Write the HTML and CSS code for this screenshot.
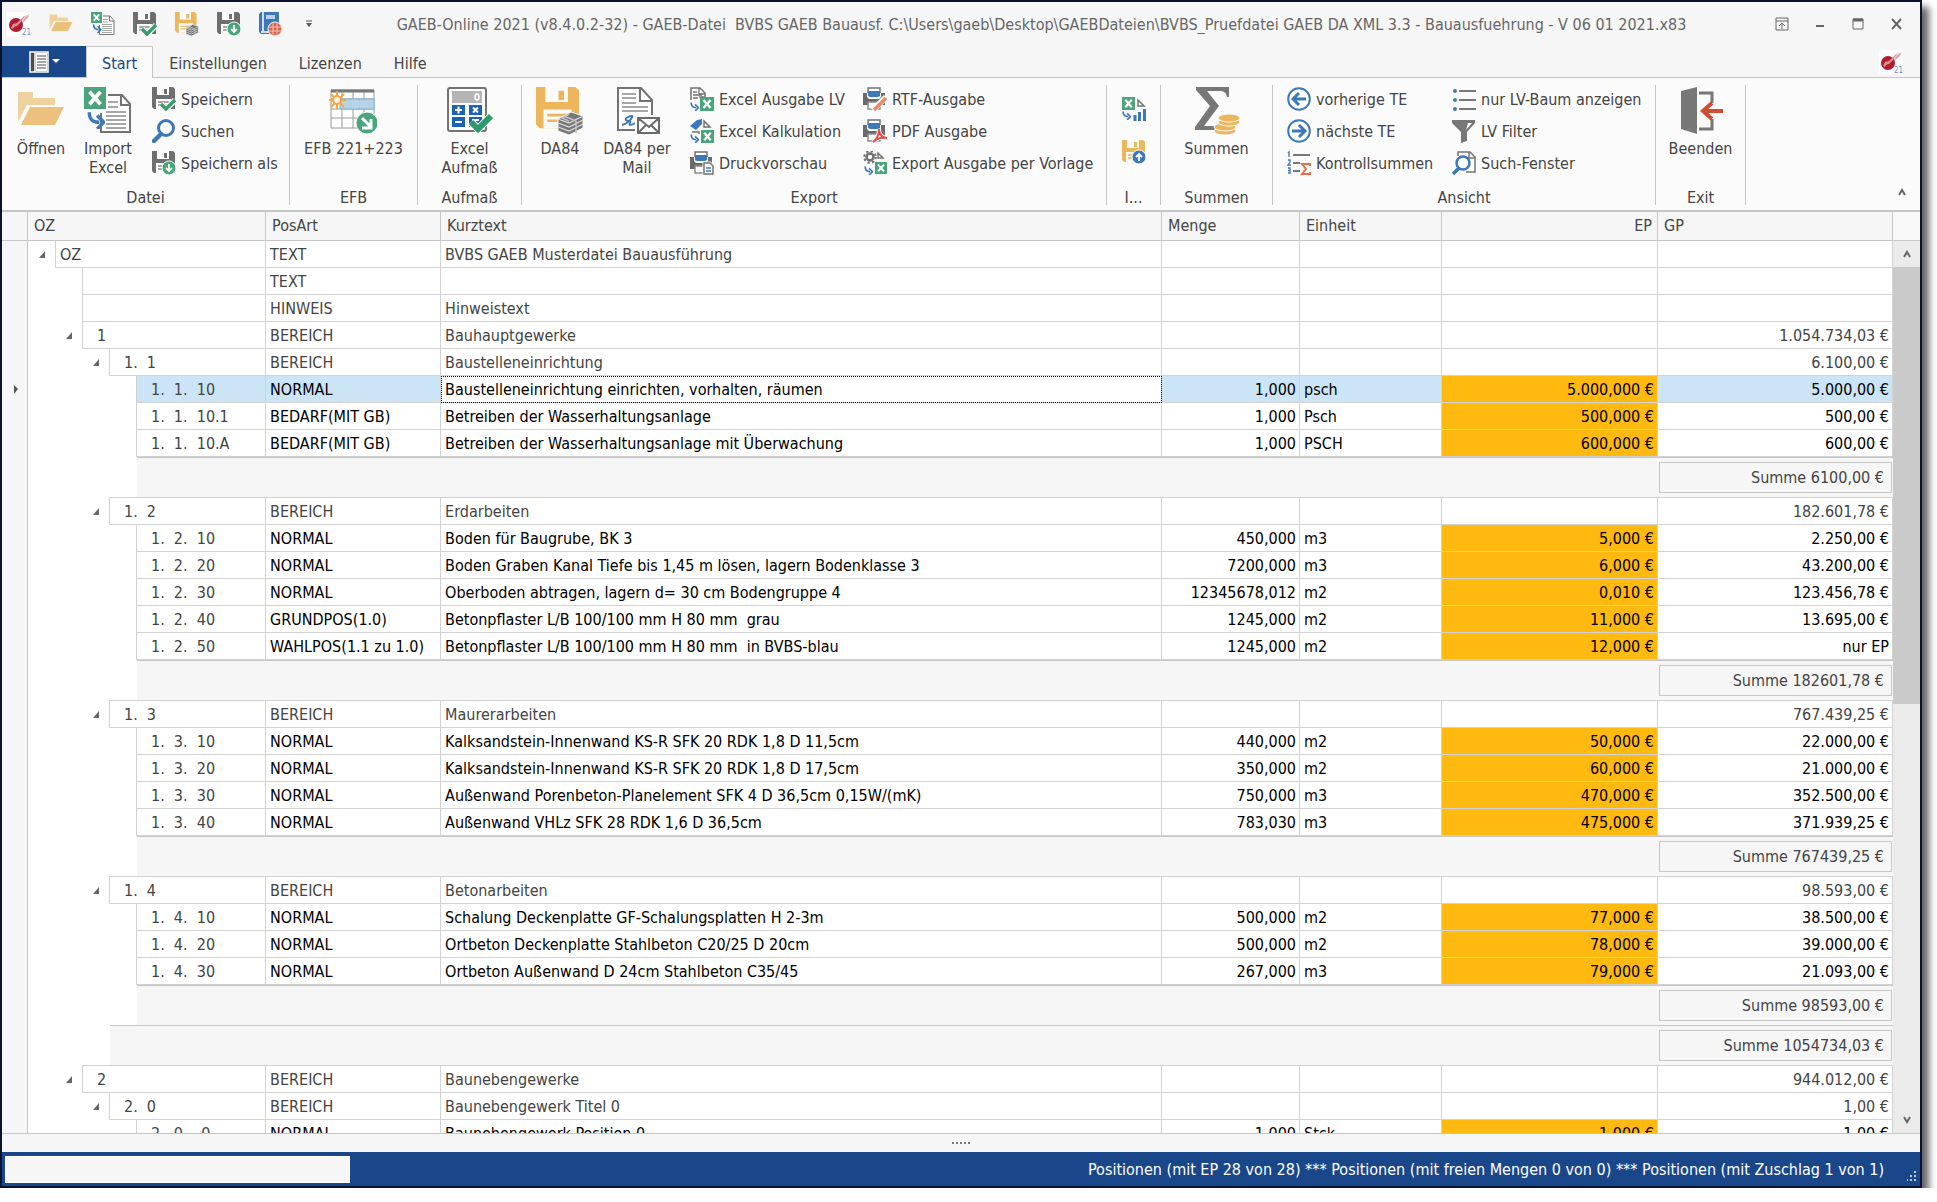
FILE: index.html
```
<!DOCTYPE html>
<html lang="de">
<head>
    <meta charset="UTF-8">
    <meta name="viewport" content="width=device-width, initial-scale=1.0">
    <title>GAEB-Online 2021</title>
    <link rel="stylesheet" href="styles.css">
</head>
<body>
    <!-- Icon sprite -->
    <svg class="sprite" aria-hidden="true">
        <symbol id="logo" viewBox="0 0 24 24">
            <rect width="24" height="24" fill="#fff"/>
            <path d="M12 9l5-5 6-2-2 4-6 6z" fill="#ecc3c8"/>
            <path d="M14 8l3-3M17 8l4-4" stroke="#d08a94" fill="none"/>
            <circle cx="9" cy="13" r="7" fill="#b01c2e"/>
            <path d="M4 16l2-4 4-1 4-4 1 2-5 5-3 1-1 2z" fill="#d98f98"/>
            <text x="15" y="23" font-size="8" fill="#6f8cc4">21</text>
        </symbol>
        <symbol id="folder" viewBox="0 0 48 48">
            <path d="M1 5h15v6h22v7H10L1 35z" fill="#f0d2a0"/>
            <path d="M13 20h34L38 38H4z" fill="#ebc17d"/>
        </symbol>
        <symbol id="xl" viewBox="0 0 14 14">
            <rect width="14" height="14" fill="#4aa57c"/>
            <path d="M3.500 3l7 8M10.500 3l-7 8" stroke="#fff" stroke-width="2.400"/>
        </symbol>
        <symbol id="arrow-in" viewBox="0 0 16 16">
            <path d="M2 1c0 6 2 9 9 9" fill="none" stroke="#3d78b8" stroke-width="3"/>
            <path d="M9 4l6 6-6 6" fill="none" stroke="#3d78b8" stroke-width="3"/>
        </symbol>
        <symbol id="import-xl" viewBox="0 0 48 48">
            <path d="M24 8h14l8 9v28H17V26" fill="#fff" stroke="#737373" stroke-width="2"/>
            <path d="M37 8v10h9" fill="none" stroke="#737373" stroke-width="2"/>
            <path d="M24 15h10M24 20h10M22 25h20M22 29h20M22 33h20M22 37h20M22 41h20" stroke="#8a8a8a" stroke-width="1.500"/>
            <use href="#xl" x="0" y="0" width="22" height="22"/>
            <use href="#arrow-in" x="3" y="24" width="18" height="18"/>
        </symbol>
        <symbol id="disk" viewBox="0 0 24 24">
            <path d="M0 0h21l2 2v20H2l-2-2z"/>
            <path d="M5 0h12v8H5zM4 12h15v10H4z" fill="#fafafa"/>
            <path d="M12 2h3v5h-3z"/>
            <path d="M6 15h11M6 18h11" stroke="currentColor" stroke-width="1.400"/>
        </symbol>
        <symbol id="save" viewBox="0 0 24 24">
            <use href="#disk" width="24" height="24" fill="#6f6f6f" color="#8a8a8a"/>
            <path d="M9 17l5 5 9-9" fill="none" stroke="#fafafa" stroke-width="6"/>
            <path d="M9 17l5 5 9-9" fill="none" stroke="#3c9b6e" stroke-width="3.500"/>
        </symbol>
        <symbol id="save-as" viewBox="0 0 24 24">
            <use href="#disk" width="24" height="24" fill="#6f6f6f" color="#8a8a8a"/>
            <circle cx="17" cy="17" r="7" fill="#4aa57c" stroke="#fafafa"/>
            <path d="M17 13v7M14 17l3 3 3-3" fill="none" stroke="#fff" stroke-width="1.800"/>
        </symbol>
        <symbol id="save-up" viewBox="0 0 24 24">
            <use href="#disk" width="24" height="24" fill="#ebb65c" color="#ebb65c"/>
            <circle cx="17" cy="17" r="7" fill="#3d78b8" stroke="#fafafa"/>
            <path d="M17 21v-7M14 17l3-3 3 3" fill="none" stroke="#fff" stroke-width="1.800"/>
        </symbol>
        <symbol id="da84" viewBox="0 0 48 48">
            <use href="#disk" width="45" height="45" fill="#ebb65c" color="#ebb65c"/>
            <path d="M22 32l13-7 12 4v12l-14 7-11-4z" fill="#777" stroke="#fafafa"/>
            <path d="M22 36l11 4 14-7M22 40l11 4 14-7M22 32l11 4 14-7" fill="none" stroke="#ddd" stroke-width="1.300"/>
            <path d="M28 29l12 5v12M33 27l-7 4 7 3" fill="none" stroke="#c4c4c4" stroke-width="1.500"/>
        </symbol>
        <symbol id="book" viewBox="0 0 24 24">
            <path d="M2 0h18v22H2l-2-2V2z" fill="#3d78b8"/>
            <path d="M4 0v19M2 20h14" stroke="#fff" stroke-width="1.500"/>
            <rect x="7" y="3" width="9" height="4" fill="#bcd2ea"/>
            <circle cx="16" cy="17" r="7" fill="#d9634d" stroke="#fafafa"/>
            <path d="M10 15h12M10 19h12M14 11v12M18 11v12" stroke="#f3c3b9"/>
        </symbol>
        <symbol id="search" viewBox="0 0 24 24">
            <circle cx="14" cy="9" r="7.500" fill="#fff" stroke="#3d78b8" stroke-width="3"/>
            <path d="M9 15l-7 7" stroke="#3d78b8" stroke-width="4.500" stroke-linecap="round"/>
        </symbol>
        <symbol id="efb" viewBox="0 0 48 48">
            <path d="M2 3h43v38H2zM2 12h43M2 22h43M2 31h43M13 3v38M24 3v38M35 3v38" fill="#fff" stroke="#9a9a9a"/>
            <path d="M2 4h43" stroke="#777" stroke-width="3"/>
            <rect x="11" y="12" width="34" height="10" fill="#b6d3e8" stroke="#7fb2d8"/>
            <path d="M8 4v18M0 13h17M2 7l13 13M15 7L2 20" stroke="#f0a848" stroke-width="2"/>
            <circle cx="8" cy="13" r="4" fill="#fdf3df" stroke="#f0a848" stroke-width="2"/>
            <circle cx="38" cy="36" r="11" fill="#4aa57c" stroke="#fafafa"/>
            <path d="M33 31l9 9M42 32v9h-9" fill="none" stroke="#fff" stroke-width="3"/>
        </symbol>
        <symbol id="calc" viewBox="0 0 48 48">
            <rect x="3" y="1" width="38" height="43" rx="2" fill="#fff" stroke="#737373" stroke-width="2"/>
            <rect x="7" y="4" width="30" height="12" fill="#b5b5b5"/>
            <ellipse cx="32" cy="10" rx="2" ry="3" fill="none" stroke="#fff" stroke-width="1.500"/>
            <path d="M7 18h13v10H7zM24 18h13v10H24zM7 30h13v10H7zM24 30h13v10H24z" fill="#1a62b5"/>
            <path d="M10 23h7M13.500 19.500v7M28 20.500l5 5M33 20.500l-5 5M10 35h7M27 33h7" stroke="#fff" stroke-width="2"/>
            <path d="M26 35l7 7 13-13" fill="none" stroke="#fafafa" stroke-width="8"/>
            <path d="M26 35l7 7 13-13" fill="none" stroke="#2a9a68" stroke-width="6"/>
        </symbol>
        <symbol id="mail" viewBox="0 0 48 48">
            <path d="M5 1h23l11 12v30H5z" fill="#fff" stroke="#737373" stroke-width="2"/>
            <path d="M27 1v13h12" fill="none" stroke="#737373" stroke-width="2"/>
            <path d="M9 7h14M9 11h14M9 16h14M9 20h26M9 24h26" stroke="#8a8a8a" stroke-width="1.500"/>
            <path d="M9 38c6-1 12-9 10-9s-8 2-6 4 6 0 4 3 2 2 5 0" fill="none" stroke="#3d78b8" stroke-width="1.800"/>
            <rect x="24" y="30" width="23" height="17" fill="#fff" stroke="#fafafa" stroke-width="4"/>
            <path d="M25 31h21v15H25zl11 9 10-9M25 46l8-8M46 46l-8-8" fill="#fff" stroke="#6b6b6b" stroke-width="2"/>
        </symbol>
        <symbol id="export-xl" viewBox="0 0 24 24">
            <path d="M1 13V1h9l5 5v4H9" fill="#fff" stroke="#737373" stroke-width="1.500"/>
            <path d="M9 1v6h6M3 5h4M3 8h9M3 11h5" fill="none" stroke="#737373" stroke-width="1.300"/>
            <use href="#arrow-in" x="0" y="15" width="9" height="9"/>
            <use href="#xl" x="10" y="10" width="14" height="14"/>
        </symbol>
        <symbol id="kalk" viewBox="0 0 24 24">
            <path d="M0 7l7-6 5-1v5l-6 6z" fill="#3d78b8"/>
            <path d="M14 2l6 6h-6zM2 13h7v2" fill="none" stroke="#737373" stroke-width="1.500"/>
            <use href="#arrow-in" x="0" y="15" width="9" height="9"/>
            <use href="#xl" x="11" y="11" width="13" height="13"/>
        </symbol>
        <symbol id="gear-xl" viewBox="0 0 24 24">
            <circle cx="7" cy="6" r="3.500" fill="none" stroke="#6f6f6f" stroke-width="2.500"/>
            <circle cx="7" cy="6" r="5.800" fill="none" stroke="#6f6f6f" stroke-width="2" stroke-dasharray="2.300 2.250"/>
            <path d="M15 2l5 5h-5z" fill="none" stroke="#737373" stroke-width="1.500"/>
            <use href="#arrow-in" x="1" y="15" width="9" height="9"/>
            <use href="#xl" x="12" y="11" width="12" height="12"/>
        </symbol>
        <symbol id="printer" viewBox="0 0 24 24">
            <path d="M5 6V1h12v5" fill="#fff" stroke="#737373" stroke-width="1.500"/>
            <path d="M0 6h4v4l2 2h10l2-2V6h4v12H0z" fill="#6b6b6b"/>
            <path d="M5 4h12v5l-2 1H7L5 9z" fill="#3d78b8"/>
            <path d="M5 15h12v7H5z" fill="#fff" stroke="#8a8a8a" stroke-width="1.500"/>
        </symbol>
        <symbol id="print-preview" viewBox="0 0 24 24">
            <use href="#printer" width="24" height="24"/>
            <path d="M14 12h6l3 3v8h-9z" fill="#fff" stroke="#fafafa" stroke-width="3"/>
            <path d="M14 12h6l3 3v8h-9z" fill="#fff" stroke="#737373" stroke-width="1.500"/>
            <path d="M16 17h5M16 20h5" stroke="#3d78b8" stroke-width="1.500"/>
        </symbol>
        <symbol id="print-rtf" viewBox="0 0 24 24">
            <use href="#printer" width="24" height="24"/>
            <path d="M10 23L23 10" stroke="#fafafa" stroke-width="6"/>
            <path d="M11 23L23 11" stroke="#ea8a60" stroke-width="3.500"/>
        </symbol>
        <symbol id="print-pdf" viewBox="0 0 24 24">
            <use href="#printer" width="24" height="24"/>
            <path d="M10 23c4-2 6-8 6-13 0 6 4 9 8 9-4-1-9 0-14 4z" fill="#fafafa" stroke="#fafafa" stroke-width="4"/>
            <path d="M10 23c4-2 6-8 6-13 0 6 4 9 8 9-4-1-9 0-14 4z" fill="none" stroke="#e8484a" stroke-width="2"/>
        </symbol>
        <symbol id="xl-chart" viewBox="0 0 24 24">
            <use href="#xl" width="13" height="13"/>
            <path d="M16 3l6 6h-6z" fill="none" stroke="#737373" stroke-width="1.500"/>
            <use href="#arrow-in" x="0" y="14" width="9" height="9"/>
            <path d="M13 24v-6M17.500 24v-9M22.500 24V12" stroke="#3d78b8" stroke-width="3"/>
        </symbol>
        <symbol id="sigma" viewBox="0 0 48 48">
            <path d="M4 0h33v10h-2c-1-5-3-6-8-6H15l12 15-15 20h11v4H3v-3l15-21L4 3z" fill="#777"/>
            <g fill="#ebb65c" stroke="#fafafa" stroke-width="1">
                <ellipse cx="33" cy="44" rx="11" ry="4"/>
                <ellipse cx="33" cy="40" rx="11" ry="4"/>
                <ellipse cx="37" cy="35" rx="11" ry="4"/>
                <ellipse cx="37" cy="31" rx="11" ry="4"/>
            </g>
        </symbol>
        <symbol id="prev" viewBox="0 0 24 24">
            <circle cx="12" cy="12" r="10.800" fill="#fff" stroke="#3d78b8" stroke-width="2"/>
            <path d="M19 12H7M12 6l-6 6 6 6" fill="none" stroke="#3d78b8" stroke-width="3"/>
        </symbol>
        <symbol id="next" viewBox="0 0 24 24">
            <circle cx="12" cy="12" r="10.800" fill="#fff" stroke="#3d78b8" stroke-width="2"/>
            <path d="M5 12h12M12 6l6 6-6 6" fill="none" stroke="#3d78b8" stroke-width="3"/>
        </symbol>
        <symbol id="checksum" viewBox="0 0 24 24">
            <path d="M6 4h17M6 12h7M6 20h7" stroke="#777" stroke-width="2"/>
            <path d="M1 2l1-1v5M1 9h2v2l-2 3h3M1 17h2v5H1M1 19.500h2" fill="none" stroke="#3d78b8" stroke-width="1.300"/>
            <path d="M23 15v-2h-8l4 5-4 5h8v-2" fill="none" stroke="#e07248" stroke-width="2"/>
        </symbol>
        <symbol id="tree" viewBox="0 0 24 24">
            <path d="M7 4h17M7 13h17M7 22h17" stroke="#777" stroke-width="2"/>
            <g fill="#3d78b8"><circle cx="3" cy="4" r="2"/><circle cx="3" cy="13" r="2"/><circle cx="3" cy="22" r="2"/></g>
        </symbol>
        <symbol id="filter" viewBox="0 0 24 24">
            <path d="M0 1h23v3l-8 9v9l-6 2V13L0 4z" fill="#777"/>
            <path d="M16 4h4l-6 7z" fill="#fafafa"/>
        </symbol>
        <symbol id="find-window" viewBox="0 0 24 24">
            <path d="M6 5V1h12l5 5v15h-9" fill="#fff" stroke="#737373" stroke-width="1.500"/>
            <path d="M17 1v6h6" fill="none" stroke="#737373" stroke-width="1.500"/>
            <circle cx="11" cy="12" r="6.500" fill="#fff" stroke="#3d78b8" stroke-width="2.500"/>
            <path d="M7 17l-6 6" stroke="#3d78b8" stroke-width="3.500"/>
        </symbol>
        <symbol id="exit" viewBox="0 0 48 48">
            <path d="M4 4L20 0v47L4 42z" fill="#777"/>
            <path d="M22 6h13v10M35 32v10H22" fill="none" stroke="#777" stroke-width="3"/>
            <path d="M46 24H28M35 16l-9 8 9 8" fill="none" stroke="#cf4d33" stroke-width="4"/>
        </symbol>
        <symbol id="menu" viewBox="0 0 20 22">
            <path d="M1 1h18v20H1z" fill="#4d4d4d" stroke="#fff" stroke-width="1.500"/>
            <path d="M6 1v20" stroke="#fff" stroke-width="1.500"/>
            <path d="M7 2h11v18H7z" fill="#fff"/>
            <path d="M8 5h9M8 8h9M8 11h9M8 14h9M8 17h9" stroke="#4d4d4d"/>
        </symbol>
        <symbol id="chev-up" viewBox="0 0 10 8"><path d="M2 7l3-5 3 5" fill="none" stroke="#666" stroke-width="2"/></symbol>
        <symbol id="chev-down" viewBox="0 0 10 8"><path d="M2 1l3 5 3-5" fill="none" stroke="#666" stroke-width="2"/></symbol>
        <symbol id="expanded" viewBox="0 0 6 7"><path d="M6 0v7H0z" fill="#666"/></symbol>
    </svg>

    <div class="window">
        <header class="titlebar">
            <div class="quick-access">
                <svg class="icon"><use href="#logo"/></svg>
                <button aria-label="Öffnen"><svg class="icon"><use href="#folder"/></svg></button>
                <button aria-label="Import Excel"><svg class="icon"><use href="#import-xl"/></svg></button>
                <button aria-label="Speichern"><svg class="icon"><use href="#save"/></svg></button>
                <button aria-label="DA84"><svg class="icon"><use href="#da84"/></svg></button>
                <button aria-label="Speichern als"><svg class="icon"><use href="#save-as"/></svg></button>
                <button aria-label="Handbuch"><svg class="icon"><use href="#book"/></svg></button>
                <button aria-label="Anpassen"><svg width="24" height="24"><path d="M5 9h6" stroke="#555"/><path d="M5 11h6l-3 4z" fill="#555"/></svg></button>
            </div>
            <div class="title">GAEB-Online 2021 (v8.4.0.2-32) - GAEB-Datei  BVBS GAEB Bauausf. C:\Users\gaeb\Desktop\GAEBDateien\BVBS_Pruefdatei GAEB DA XML 3.3 - Bauausfuehrung - V 06 01 2021.x83</div>
            <div class="window-buttons">
                <button aria-label="Menüband"><svg width="14" height="14"><path d="M1 1h12v12H1zM1 4h12M7 12V6M4 9l3-3 3 3" fill="none" stroke="#666"/></svg></button>
                <button aria-label="Minimieren"><svg width="14" height="14"><path d="M3 9h8" stroke="#666" stroke-width="2"/></svg></button>
                <button aria-label="Maximieren"><svg width="14" height="14"><path d="M2 2h10v10H2z" fill="none" stroke="#666"/><path d="M2 3h10" stroke="#666" stroke-width="3"/></svg></button>
                <button aria-label="Schließen"><svg width="14" height="14"><path d="M3 2l9 10M12 2L3 12" stroke="#666" stroke-width="2"/></svg></button>
            </div>
        </header>

        <nav class="tabs">
            <button class="app-menu" aria-label="Datei"><svg width="20" height="22"><use href="#menu"/></svg><svg width="8" height="5"><path d="M0 0h8L4 4z" fill="#fff"/></svg></button>
            <button class="tab active">Start</button>
            <button class="tab">Einstellungen</button>
            <button class="tab">Lizenzen</button>
            <button class="tab">Hilfe</button>
            <svg class="icon tab-logo"><use href="#logo"/></svg>
        </nav>

        <div class="ribbon">
            <section class="group">
                <div class="group-body datei">
                    <button class="big"><svg><use href="#folder"/></svg>Öffnen</button>
                    <button class="big"><svg><use href="#import-xl"/></svg>Import<br>Excel</button>
                    <div class="small-list">
                        <button class="small"><svg class="icon"><use href="#save"/></svg>Speichern</button>
                        <button class="small"><svg class="icon"><use href="#search"/></svg>Suchen</button>
                        <button class="small"><svg class="icon"><use href="#save-as"/></svg>Speichern als</button>
                    </div>
                </div>
                <div class="caption">Datei</div>
            </section>
            <section class="group">
                <div class="group-body">
                    <button class="big"><svg><use href="#efb"/></svg>EFB 221+223</button>
                </div>
                <div class="caption">EFB</div>
            </section>
            <section class="group">
                <div class="group-body">
                    <button class="big"><svg><use href="#calc"/></svg>Excel<br>Aufmaß</button>
                </div>
                <div class="caption">Aufmaß</div>
            </section>
            <section class="group">
                <div class="group-body export">
                    <button class="big"><svg><use href="#da84"/></svg>DA84</button>
                    <button class="big"><svg><use href="#mail"/></svg>DA84 per<br>Mail</button>
                    <div class="small-list">
                        <button class="small"><svg class="icon"><use href="#export-xl"/></svg>Excel Ausgabe LV</button>
                        <button class="small"><svg class="icon"><use href="#kalk"/></svg>Excel Kalkulation</button>
                        <button class="small"><svg class="icon"><use href="#print-preview"/></svg>Druckvorschau</button>
                    </div>
                    <div class="small-list">
                        <button class="small"><svg class="icon"><use href="#print-rtf"/></svg>RTF-Ausgabe</button>
                        <button class="small"><svg class="icon"><use href="#print-pdf"/></svg>PDF Ausgabe</button>
                        <button class="small"><svg class="icon"><use href="#gear-xl"/></svg>Export Ausgabe per Vorlage</button>
                    </div>
                </div>
                <div class="caption">Export</div>
            </section>
            <section class="group">
                <div class="group-body">
                    <div class="icon-list">
                        <button aria-label="Excel Auswertung"><svg class="icon"><use href="#xl-chart"/></svg></button>
                        <button aria-label="Hochladen"><svg class="icon"><use href="#save-up"/></svg></button>
                    </div>
                </div>
                <div class="caption">I...</div>
            </section>
            <section class="group">
                <div class="group-body">
                    <button class="big"><svg><use href="#sigma"/></svg>Summen</button>
                </div>
                <div class="caption">Summen</div>
            </section>
            <section class="group">
                <div class="group-body ansicht">
                    <div class="small-list">
                        <button class="small"><svg class="icon"><use href="#prev"/></svg>vorherige TE</button>
                        <button class="small"><svg class="icon"><use href="#next"/></svg>nächste TE</button>
                        <button class="small"><svg class="icon"><use href="#checksum"/></svg>Kontrollsummen</button>
                    </div>
                    <div class="small-list">
                        <button class="small"><svg class="icon"><use href="#tree"/></svg>nur LV-Baum anzeigen</button>
                        <button class="small"><svg class="icon"><use href="#filter"/></svg>LV Filter</button>
                        <button class="small"><svg class="icon"><use href="#find-window"/></svg>Such-Fenster</button>
                    </div>
                </div>
                <div class="caption">Ansicht</div>
            </section>
            <section class="group">
                <div class="group-body">
                    <button class="big"><svg><use href="#exit"/></svg>Beenden</button>
                </div>
                <div class="caption">Exit</div>
            </section>
            <button class="collapse" aria-label="Menüband minimieren"><svg width="10" height="8"><use href="#chev-up"/></svg></button>
        </div>

        <main class="grid-area">
            <div class="grid-view">
                <table class="lv">
                    <colgroup>
                        <col class="c-mark"><col class="c-root"><col class="c-ind"><col class="c-ind"><col class="c-ind"><col class="c-oz"><col class="c-art"><col><col class="c-menge"><col class="c-einheit"><col class="c-ep"><col class="c-gp">
                    </colgroup>
                    <thead>
                        <tr><th></th><th colspan="5">OZ</th><th>PosArt</th><th>Kurztext</th><th>Menge</th><th>Einheit</th><th class="num">EP</th><th>GP</th></tr>
                    </thead>
                    <tbody>
                        <tr class="head"><td></td><td class="tg"><svg><use href="#expanded"/></svg></td><td colspan="4">OZ</td><td>TEXT</td><td>BVBS GAEB Musterdatei Bauausführung</td><td></td><td></td><td></td><td></td></tr>
                        <tr class="head"><td></td><td class="tg" colspan="2"></td><td colspan="3"></td><td>TEXT</td><td></td><td></td><td></td><td></td><td></td></tr>
                        <tr class="head"><td></td><td class="tg" colspan="2"></td><td colspan="3"></td><td>HINWEIS</td><td>Hinweistext</td><td></td><td></td><td></td><td></td></tr>
                        <tr class="head"><td></td><td class="tg" colspan="2"><svg><use href="#expanded"/></svg></td><td class="oz" colspan="3">1</td><td>BEREICH</td><td>Bauhauptgewerke</td><td></td><td></td><td></td><td class="num">1.054.734,03 €</td></tr>
                        <tr class="head"><td></td><td class="tg" colspan="3"><svg><use href="#expanded"/></svg></td><td class="oz" colspan="2">1.  1</td><td>BEREICH</td><td>Baustelleneinrichtung</td><td></td><td></td><td></td><td class="num">6.100,00 €</td></tr>
                        <tr class="pos selected"><td class="mark"><svg width="4" height="9"><path d="M0 0l4 4-4 5z" fill="#555"/></svg></td><td class="tg" colspan="4"></td><td class="oz">1.  1.  10</td><td>NORMAL</td><td class="focus">Baustelleneinrichtung einrichten, vorhalten, räumen</td><td class="num">1,000</td><td>psch</td><td class="num ep">5.000,000 €</td><td class="num">5.000,00 €</td></tr>
                        <tr class="pos"><td></td><td class="tg" colspan="4"></td><td class="oz">1.  1.  10.1</td><td>BEDARF(MIT GB)</td><td>Betreiben der Wasserhaltungsanlage</td><td class="num">1,000</td><td>Psch</td><td class="num ep">500,000 €</td><td class="num">500,00 €</td></tr>
                        <tr class="pos"><td></td><td class="tg" colspan="4"></td><td class="oz">1.  1.  10.A</td><td>BEDARF(MIT GB)</td><td>Betreiben der Wasserhaltungsanlage mit Überwachung</td><td class="num">1,000</td><td>PSCH</td><td class="num ep">600,000 €</td><td class="num">600,00 €</td></tr>
                        <tr class="sum"><td></td><td class="gap" colspan="4"></td><td colspan="6"></td><td><div class="sum-box">Summe 6100,00 €</div></td></tr>

                        <tr class="head"><td></td><td class="tg" colspan="3"><svg><use href="#expanded"/></svg></td><td class="oz" colspan="2">1.  2</td><td>BEREICH</td><td>Erdarbeiten</td><td></td><td></td><td></td><td class="num">182.601,78 €</td></tr>
                        <tr class="pos"><td></td><td class="tg" colspan="4"></td><td class="oz">1.  2.  10</td><td>NORMAL</td><td>Boden für Baugrube, BK 3</td><td class="num">450,000</td><td>m3</td><td class="num ep">5,000 €</td><td class="num">2.250,00 €</td></tr>
                        <tr class="pos"><td></td><td class="tg" colspan="4"></td><td class="oz">1.  2.  20</td><td>NORMAL</td><td>Boden Graben Kanal Tiefe bis 1,45 m lösen, lagern Bodenklasse 3</td><td class="num">7200,000</td><td>m3</td><td class="num ep">6,000 €</td><td class="num">43.200,00 €</td></tr>
                        <tr class="pos"><td></td><td class="tg" colspan="4"></td><td class="oz">1.  2.  30</td><td>NORMAL</td><td>Oberboden abtragen, lagern d= 30 cm Bodengruppe 4</td><td class="num">12345678,012</td><td>m2</td><td class="num ep">0,010 €</td><td class="num">123.456,78 €</td></tr>
                        <tr class="pos"><td></td><td class="tg" colspan="4"></td><td class="oz">1.  2.  40</td><td>GRUNDPOS(1.0)</td><td>Betonpflaster L/B 100/100 mm H 80 mm  grau</td><td class="num">1245,000</td><td>m2</td><td class="num ep">11,000 €</td><td class="num">13.695,00 €</td></tr>
                        <tr class="pos"><td></td><td class="tg" colspan="4"></td><td class="oz">1.  2.  50</td><td>WAHLPOS(1.1 zu 1.0)</td><td>Betonpflaster L/B 100/100 mm H 80 mm  in BVBS-blau</td><td class="num">1245,000</td><td>m2</td><td class="num ep">12,000 €</td><td class="num">nur EP</td></tr>
                        <tr class="sum"><td></td><td class="gap" colspan="4"></td><td colspan="6"></td><td><div class="sum-box">Summe 182601,78 €</div></td></tr>

                        <tr class="head"><td></td><td class="tg" colspan="3"><svg><use href="#expanded"/></svg></td><td class="oz" colspan="2">1.  3</td><td>BEREICH</td><td>Maurerarbeiten</td><td></td><td></td><td></td><td class="num">767.439,25 €</td></tr>
                        <tr class="pos"><td></td><td class="tg" colspan="4"></td><td class="oz">1.  3.  10</td><td>NORMAL</td><td>Kalksandstein-Innenwand KS-R SFK 20 RDK 1,8 D 11,5cm</td><td class="num">440,000</td><td>m2</td><td class="num ep">50,000 €</td><td class="num">22.000,00 €</td></tr>
                        <tr class="pos"><td></td><td class="tg" colspan="4"></td><td class="oz">1.  3.  20</td><td>NORMAL</td><td>Kalksandstein-Innenwand KS-R SFK 20 RDK 1,8 D 17,5cm</td><td class="num">350,000</td><td>m2</td><td class="num ep">60,000 €</td><td class="num">21.000,00 €</td></tr>
                        <tr class="pos"><td></td><td class="tg" colspan="4"></td><td class="oz">1.  3.  30</td><td>NORMAL</td><td>Außenwand Porenbeton-Planelement SFK 4 D 36,5cm 0,15W/(mK)</td><td class="num">750,000</td><td>m3</td><td class="num ep">470,000 €</td><td class="num">352.500,00 €</td></tr>
                        <tr class="pos"><td></td><td class="tg" colspan="4"></td><td class="oz">1.  3.  40</td><td>NORMAL</td><td>Außenwand VHLz SFK 28 RDK 1,6 D 36,5cm</td><td class="num">783,030</td><td>m3</td><td class="num ep">475,000 €</td><td class="num">371.939,25 €</td></tr>
                        <tr class="sum"><td></td><td class="gap" colspan="4"></td><td colspan="6"></td><td><div class="sum-box">Summe 767439,25 €</div></td></tr>

                        <tr class="head"><td></td><td class="tg" colspan="3"><svg><use href="#expanded"/></svg></td><td class="oz" colspan="2">1.  4</td><td>BEREICH</td><td>Betonarbeiten</td><td></td><td></td><td></td><td class="num">98.593,00 €</td></tr>
                        <tr class="pos"><td></td><td class="tg" colspan="4"></td><td class="oz">1.  4.  10</td><td>NORMAL</td><td>Schalung Deckenplatte GF-Schalungsplatten H 2-3m</td><td class="num">500,000</td><td>m2</td><td class="num ep">77,000 €</td><td class="num">38.500,00 €</td></tr>
                        <tr class="pos"><td></td><td class="tg" colspan="4"></td><td class="oz">1.  4.  20</td><td>NORMAL</td><td>Ortbeton Deckenplatte Stahlbeton C20/25 D 20cm</td><td class="num">500,000</td><td>m2</td><td class="num ep">78,000 €</td><td class="num">39.000,00 €</td></tr>
                        <tr class="pos"><td></td><td class="tg" colspan="4"></td><td class="oz">1.  4.  30</td><td>NORMAL</td><td>Ortbeton Außenwand D 24cm Stahlbeton C35/45</td><td class="num">267,000</td><td>m3</td><td class="num ep">79,000 €</td><td class="num">21.093,00 €</td></tr>
                        <tr class="sum"><td></td><td class="gap" colspan="4"></td><td colspan="6"></td><td><div class="sum-box">Summe 98593,00 €</div></td></tr>
                        <tr class="sum"><td></td><td class="gap" colspan="3"></td><td colspan="7"></td><td><div class="sum-box">Summe 1054734,03 €</div></td></tr>

                        <tr class="head"><td></td><td class="tg" colspan="2"><svg><use href="#expanded"/></svg></td><td class="oz" colspan="3">2</td><td>BEREICH</td><td>Baunebengewerke</td><td></td><td></td><td></td><td class="num">944.012,00 €</td></tr>
                        <tr class="head"><td></td><td class="tg" colspan="3"><svg><use href="#expanded"/></svg></td><td class="oz" colspan="2">2.  0</td><td>BEREICH</td><td>Baunebengewerk Titel 0</td><td></td><td></td><td></td><td class="num">1,00 €</td></tr>
                        <tr class="pos"><td></td><td class="tg" colspan="4"></td><td class="oz">2.  0.   0</td><td>NORMAL</td><td>Baunebengewerk Position 0</td><td class="num">1,000</td><td>Stck</td><td class="num ep">1,000 €</td><td class="num">1,00 €</td></tr>
                    </tbody>
                </table>
            </div>
            <div class="scrollbar">
                <div class="scroll-head"></div>
                <button aria-label="Nach oben"><svg width="10" height="8"><use href="#chev-up"/></svg></button>
                <div class="track"><div class="thumb"></div></div>
                <button aria-label="Nach unten"><svg width="10" height="8"><use href="#chev-down"/></svg></button>
            </div>
        </main>

        <div class="splitter"><span></span><span></span><span></span><span></span><span></span></div>

        <footer class="statusbar">
            <input type="text" aria-label="Status" readonly>
            <div class="status-text">Positionen (mit EP 28 von 28) *** Positionen (mit freien Mengen 0 von 0) *** Positionen (mit Zuschlag 1 von 1)</div>
            <svg width="10" height="10"><path d="M7 0h2v2H7zM7 4h2v2H7zM7 8h2v2H7zM3 4h2v2H3zM3 8h2v2H3zM0 8h1v2H0z" fill="#b9c8dd"/></svg>
        </footer>
    </div>
</body>
</html>
```
FILE: styles.css
```
* {
    margin: 0;
    padding: 0;
    box-sizing: border-box;
}

body {
    font-family: Tahoma, "DejaVu Sans Condensed", "Noto Sans", sans-serif;
    font-size: 16px;
    line-height: 19px;
    color: #444;
    background: #fff;
    overflow: hidden;
}

button,
input {
    font: inherit;
    color: inherit;
    background: none;
    border: none;
}

svg {
    display: block;
    flex: none;
}

.sprite {
    position: absolute;
    width: 0;
    height: 0;
}

.icon {
    width: 24px;
    height: 24px;
}

.window {
    display: flex;
    flex-direction: column;
    height: calc(100vh - 14px);
    margin-right: 15px;
    border: 2px solid #0a1230;
    background: #f6f6f6;
    box-shadow: 7px 7px 7px rgba(0, 0, 0, 0.6);
}

/* Title bar */
.titlebar {
    display: flex;
    align-items: center;
    height: 44px;
    flex: none;
}

.quick-access {
    display: flex;
    gap: 18px;
    width: 318px;
    padding-left: 5px;
}

.title {
    flex: 1;
    text-align: center;
    white-space: pre;
    color: #666;
    overflow: hidden;
}

.window-buttons {
    display: flex;
    width: 157px;
}

.window-buttons button {
    display: flex;
    justify-content: center;
    width: 38px;
}

/* Tabs */
.tabs {
    display: flex;
    height: 32px;
    flex: none;
    border-bottom: 1px solid #c6c6c6;
}

.app-menu {
    display: flex;
    align-items: center;
    justify-content: center;
    gap: 3px;
    width: 84px;
    background: #19478a;
}

.tab {
    padding: 2px 15px 0;
    border: 1px solid transparent;
    border-bottom: none;
}

.tab.active {
    margin-bottom: -1px;
    background: #fbfbfb;
    border-color: #c6c6c6;
    color: #19478a;
}

.tab-logo {
    margin: 4px 17px 0 auto;
}

/* Ribbon */
.ribbon {
    display: grid;
    grid-template-columns: 288px 128px 104px 585px 54px 112px 383px 90px 1fr;
    padding: 7px 0 5px;
    background: #fbfbfb;
    border-bottom: 2px solid #c6c6c6;
}

.group {
    display: flex;
    flex-direction: column;
    height: 120px;
    border-right: 1px solid #c6c6c6;
}

.group-body {
    display: flex;
    justify-content: center;
    flex: 1;
    padding-top: 2px;
}

.datei {
    display: grid;
    grid-template-columns: 78px 56px 1fr;
}

.datei .small-list {
    padding-left: 16px;
}

.export {
    display: grid;
    grid-template-columns: 76px 78px 187px 1fr;
}

.export .small-list:nth-child(3) {
    padding-left: 14px;
}

.ansicht {
    display: grid;
    grid-template-columns: 165px 1fr;
    padding-left: 14px;
}

.caption {
    line-height: 15px;
    text-align: center;
}

.big {
    display: flex;
    flex-direction: column;
    align-items: center;
    white-space: nowrap;
}

.big svg {
    width: 48px;
    height: 48px;
    margin-bottom: 4px;
}

.small-list {
    display: flex;
    flex-direction: column;
    align-items: flex-start;
    gap: 8px;
}

.small {
    display: flex;
    align-items: center;
    gap: 5px;
    height: 24px;
    white-space: nowrap;
}

.icon-list {
    display: flex;
    flex-direction: column;
    gap: 19px;
    padding-top: 10px;
}

.collapse {
    justify-self: end;
    align-self: end;
    margin: 0 13px 9px 0;
}

/* Grid */
.grid-area {
    display: flex;
    flex: 1;
    min-height: 0;
    background: #fff;
    border-bottom: 1px solid #c6c6c6;
}

.grid-view {
    flex: 1;
    overflow: hidden;
}

.lv {
    width: 100%;
    table-layout: fixed;
    border-collapse: separate;
    border-spacing: 0;
}

.c-mark { width: 26px; }
.c-root { width: 28px; }
.c-ind { width: 27px; }
.c-oz { width: 129px; }
.c-art { width: 175px; }
.c-menge { width: 138px; }
.c-einheit { width: 142px; }
.c-ep { width: 216px; }
.c-gp { width: 235px; }

.lv th {
    height: 29px;
    padding: 0 5px 2px 6px;
    text-align: left;
    font-weight: normal;
    background: #f6f6f6;
    border-right: 1px solid #c6c6c6;
    border-bottom: 1px solid #c6c6c6;
}

.lv td {
    height: 27px;
    padding: 0 3px 0 4px;
    white-space: pre;
    border-right: 1px solid #d2d2d2;
    border-bottom: 1px solid #d2d2d2;
}

.lv td:first-child {
    background: #f6f6f6;
    border-right: 1px solid #c6c6c6;
    border-bottom: none;
}

.lv .num {
    text-align: right;
}

.lv .tg {
    padding-right: 10px;
    border-bottom: none;
}

.tg svg {
    width: 6px;
    height: 7px;
    margin-left: auto;
}

.lv .oz {
    padding-left: 14px;
    color: #444;
}

.pos {
    color: #000;
}

.pos .ep {
    background: #ffb90f;
}

.selected td:nth-child(n+3):not(.ep, .focus) {
    background: #cce5f6;
}

.selected .focus {
    outline: 1px dotted #000;
    outline-offset: -1px;
}

.mark svg {
    margin-left: 8px;
}

.lv .sum td {
    height: 40px;
    background: #f6f6f6;
    border-right: none;
    border-bottom: none;
    border-top: 1px solid #c6c6c6;
    padding: 0 1px;
}

.lv .sum td:first-child {
    border-top: none;
    border-right: 1px solid #c6c6c6;
}

.lv .sum .gap {
    background: #fff;
    border-top: none;
}

/* First row below a group footer closes the gap with its own top line */
.lv .sum + .head td {
    height: 28px;
    border-top: 1px solid #d2d2d2;
}

.lv .sum + .head td:first-child,
.lv .sum + .head .tg {
    border-top: none;
}

.sum-box {
    height: 31px;
    line-height: 29px;
    padding-right: 7px;
    text-align: right;
    border: 1px solid #c6c6c6;
}

/* Scrollbar */
.scrollbar {
    display: flex;
    flex-direction: column;
    width: 27px;
    background: #ebebeb;
}

.scroll-head {
    height: 29px;
    background: #f9f9f9;
    border-bottom: 1px solid #c6c6c6;
}

.scrollbar button {
    display: flex;
    align-items: center;
    justify-content: center;
    height: 26px;
}

.track {
    flex: 1;
}

.thumb {
    height: 52%;
    background: #cacaca;
}

/* Bottom */
.splitter {
    display: flex;
    align-items: center;
    justify-content: center;
    gap: 2px;
    height: 18px;
    flex: none;
}

.splitter span {
    width: 2px;
    height: 2px;
    background: #777;
}

.statusbar {
    display: flex;
    align-items: center;
    height: 34px;
    flex: none;
    padding: 0 3px;
    background: #19478a;
    color: #fff;
}

.statusbar input {
    width: 345px;
    height: 27px;
    background: #f6f6f6;
    border: 1px solid #fff;
}

.status-text {
    flex: 1;
    text-align: right;
    padding-right: 23px;
}

.statusbar svg {
    align-self: flex-end;
    margin-bottom: 5px;
}
```
